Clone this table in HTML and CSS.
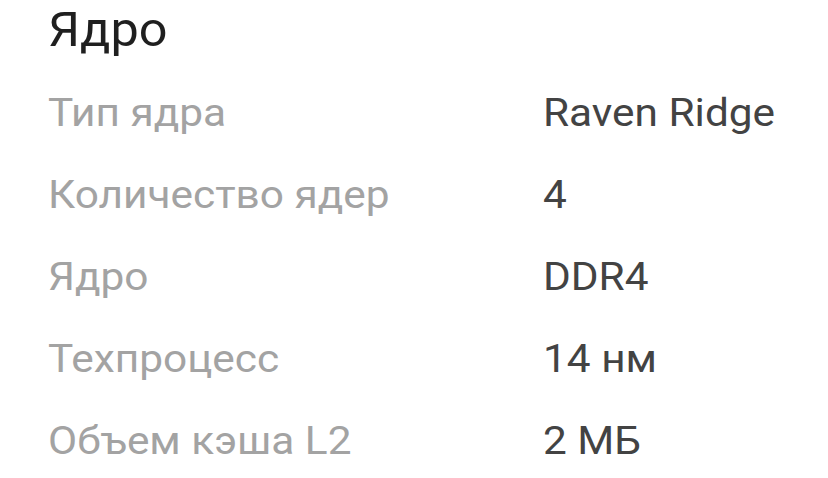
FILE: index.html
```html
<!DOCTYPE html>
<html lang="ru">
<head>
<meta charset="utf-8">
<link rel="stylesheet" href="styles.css">
</head>
<body>
<section class="spec">
  <h1 class="spec-title"><span class="stretch-title">Ядро</span></h1>
  <div class="spec-row"><span class="spec-label">Тип ядра</span><span class="spec-value">Raven Ridge</span></div>
  <div class="spec-row"><span class="spec-label">Количество ядер</span><span class="spec-value">4</span></div>
  <div class="spec-row"><span class="spec-label">Ядро</span><span class="spec-value">DDR4</span></div>
  <div class="spec-row"><span class="spec-label">Техпроцесс</span><span class="spec-value">14 нм</span></div>
  <div class="spec-row"><span class="spec-label">Объем кэша L2</span><span class="spec-value">2 МБ</span></div>
</section>
</body>
</html>
```
FILE: styles.css
```css
html, body {
  margin: 0;
  padding: 0;
  background: #ffffff;
}
body {
  font-family: Roboto, "Noto Sans", sans-serif;
  width: 828px;
  height: 478px;
  overflow: hidden;
}
.spec {
  padding: 0 0 0 48px;
}
.spec-title {
  margin: 0 0 12px;
  font-size: 48px;
  font-weight: 400;
  color: #1f1f1f;
  line-height: 60px;
}
.stretch-title {
  display: inline-block;
  transform: scaleX(1.05);
  transform-origin: left center;
}
.spec-row {
  display: grid;
  grid-template-columns: 495px 1fr;
  height: 82px;
  align-items: center;
  font-size: 38px;
}
.spec-label,
.spec-value {
  justify-self: start;
  transform: scaleX(1.115);
  transform-origin: left center;
}
.spec-label {
  color: #a3a3a3;
}
.spec-value {
  color: #434343;
}
```
